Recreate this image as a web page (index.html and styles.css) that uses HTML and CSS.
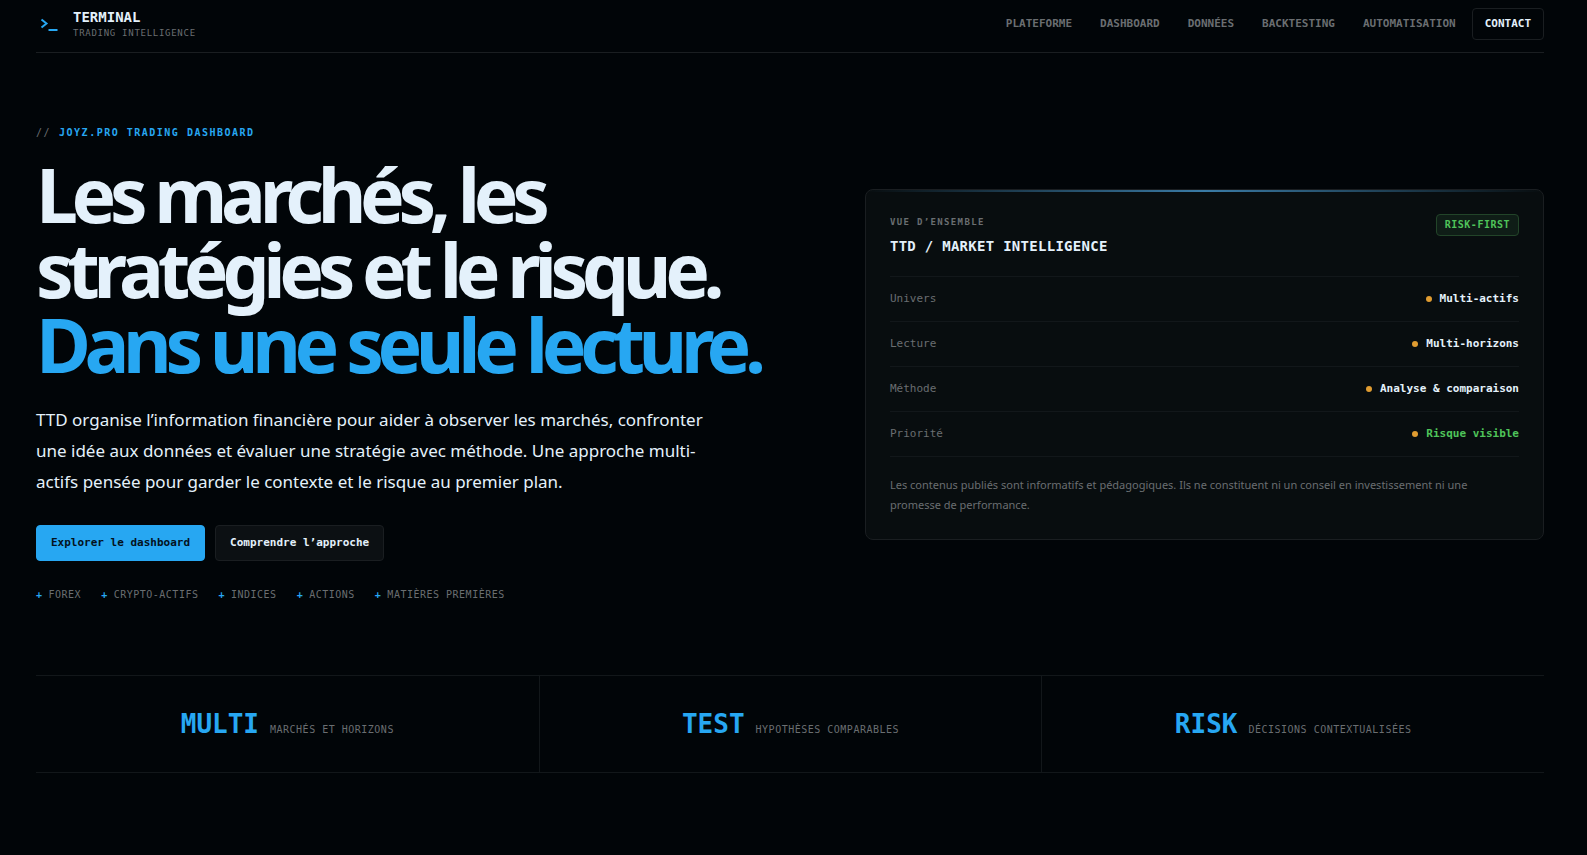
FILE: index.html
```html
<!DOCTYPE html>
<html lang="fr">
<head>
<meta charset="utf-8">
<meta name="viewport" content="width=device-width, initial-scale=1">
<title>Terminal – Trading Intelligence</title>
<link rel="stylesheet" href="styles.css">
</head>
<body>
<div class="shell">
  <header class="header">
    <a class="brand" href="#">
      <svg class="brand-mark" viewBox="0 0 26 26" fill="none" stroke="currentColor" stroke-width="2" aria-hidden="true"><path d="M5.5 8.5 10.5 12.5 5.5 16.5M12.5 19H21.5"/></svg>
      <span class="brand-text">
        <strong class="brand-name">TERMINAL</strong>
        <span class="brand-tag">TRADING INTELLIGENCE</span>
      </span>
    </a>
    <nav class="nav">
      <a class="nav-link" href="#">PLATEFORME</a>
      <a class="nav-link" href="#">DASHBOARD</a>
      <a class="nav-link" href="#">DONNÉES</a>
      <a class="nav-link" href="#">BACKTESTING</a>
      <a class="nav-link" href="#">AUTOMATISATION</a>
      <a class="nav-link nav-contact" href="#">CONTACT</a>
    </nav>
  </header>

  <main>
    <section class="hero">
      <div class="hero-copy">
        <p class="eyebrow"><span class="eyebrow-mark">//</span><span>JOYZ.PRO TRADING DASHBOARD</span></p>
        <h1 class="title">Les marchés, les stratégies et le risque. <span class="title-accent">Dans une seule lecture.</span></h1>
        <p class="lead">TTD organise l’information financière pour aider à observer les marchés, confronter une idée aux données et évaluer une stratégie avec méthode. Une approche multi-actifs pensée pour garder le contexte et le risque au premier plan.</p>
        <div class="actions">
          <a class="button button-primary" href="#">Explorer le dashboard</a>
          <a class="button" href="#">Comprendre l’approche</a>
        </div>
        <ul class="tags">
          <li>FOREX</li>
          <li>CRYPTO-ACTIFS</li>
          <li>INDICES</li>
          <li>ACTIONS</li>
          <li>MATIÈRES PREMIÈRES</li>
        </ul>
      </div>

      <aside class="card">
        <div class="card-head">
          <div>
            <p class="card-kicker">VUE D’ENSEMBLE</p>
            <h2 class="card-title">TTD / MARKET INTELLIGENCE</h2>
          </div>
          <span class="badge">RISK-FIRST</span>
        </div>
        <dl class="rows">
          <div class="row"><dt>Univers</dt><dd>Multi-actifs</dd></div>
          <div class="row"><dt>Lecture</dt><dd>Multi-horizons</dd></div>
          <div class="row"><dt>Méthode</dt><dd>Analyse &amp; comparaison</dd></div>
          <div class="row"><dt>Priorité</dt><dd class="positive">Risque visible</dd></div>
        </dl>
        <p class="note">Les contenus publiés sont informatifs et pédagogiques. Ils ne constituent ni un conseil en investissement ni une promesse de performance.</p>
      </aside>
    </section>

    <section class="stats">
      <div class="stat"><strong>MULTI</strong><span>MARCHÉS ET HORIZONS</span></div>
      <div class="stat"><strong>TEST</strong><span>HYPOTHÈSES COMPARABLES</span></div>
      <div class="stat"><strong>RISK</strong><span>DÉCISIONS CONTEXTUALISÉES</span></div>
    </section>
  </main>
</div>
</body>
</html>
```
FILE: styles.css
```css
:root {
  --bg: #010508;
  --text: #e4f1fb;
  --muted: #6a6e71;
  --line: #1a1e21;
  --line-soft: #12171a;
  --blue: #27a7f2;
  --green: #4fc45a;
  --orange: #e09c31;
  --mono: "DejaVu Sans Mono", "Liberation Mono", monospace;
  --sans: "Noto Sans", "Open Sans", sans-serif;
}

* { box-sizing: border-box; }

body {
  margin: 0;
  background: var(--bg);
  color: var(--text);
  font-family: var(--sans);
}

p, h1, h2, ul, dl, dd { margin: 0; padding: 0; }
a { color: inherit; text-decoration: none; }

.shell { padding: 0 43px 0 36px; }

.header {
  display: flex;
  align-items: center;
  justify-content: space-between;
  padding: 8px 0 12px;
  border-bottom: 1px solid var(--line);
}

.brand { display: flex; align-items: center; gap: 11px; font-family: var(--mono); }
.brand-mark { width: 26px; height: 26px; color: var(--blue); }
.brand-text { display: flex; flex-direction: column; }
.brand-name { font-size: 14px; line-height: 18px; }
.brand-tag { font-size: 9px; line-height: 14px; letter-spacing: 0.08em; color: var(--muted); }

.nav { display: flex; gap: 4px; font-family: var(--mono); }
.nav-link {
  padding: 0 12px;
  font-size: 11px;
  font-weight: 700;
  line-height: 30px;
  color: var(--muted);
  border: 1px solid transparent;
  border-width: 1px 0;
}
.nav-contact { color: var(--text); border: 1px solid var(--line); border-radius: 4px; }

.hero {
  display: grid;
  grid-template-columns: 11fr 10fr;
  align-items: center;
  gap: 82px;
  padding: 72px 0;
}

.eyebrow {
  display: flex;
  gap: 8px;
  font: 700 10px/16px var(--mono);
  letter-spacing: 0.15em;
  color: var(--blue);
}
.eyebrow-mark { font-weight: 400; color: var(--muted); }

.title {
  margin-top: 16px;
  font-size: 75px;
  line-height: 75px;
  font-weight: 700;
  letter-spacing: -0.085em;
}
.title-accent { display: block; color: var(--blue); }

.lead {
  max-width: 690px;
  margin-top: 22px;
  font-size: 17px;
  line-height: 31px;
}

.actions { display: flex; gap: 10px; margin-top: 28px; }
.button {
  padding: 0 14px;
  font: 700 11px/34px var(--mono);
  background: #0c1013;
  border: 1px solid var(--line);
  border-radius: 4px;
}
.button-primary { color: #04121d; background: var(--blue); border-color: var(--blue); }

.tags {
  display: flex;
  flex-wrap: wrap;
  gap: 20px;
  margin-top: 26px;
  list-style: none;
  font: 10px/16px var(--mono);
  letter-spacing: 0.05em;
  color: var(--muted);
}
.tags li { display: flex; gap: 6px; }
.tags li::before { content: "+"; color: var(--blue); font-weight: 700; }

.card {
  position: relative;
  padding: 24px;
  background: #080d0f;
  border: 1px solid var(--line);
  border-radius: 8px;
  overflow: hidden;
}
.card::before {
  content: "";
  position: absolute;
  inset: 0 0 auto;
  height: 2px;
  background: linear-gradient(90deg, transparent, #3a7ba6, transparent);
}
.card-head {
  display: flex;
  align-items: flex-start;
  justify-content: space-between;
  padding-bottom: 20px;
  border-bottom: 1px solid var(--line-soft);
}
.card-kicker { font: 700 9px/16px var(--mono); letter-spacing: 0.15em; color: var(--muted); }
.card-title { margin-top: 6px; font: 700 14px/20px var(--mono); letter-spacing: 0.02em; }
.badge {
  padding: 0 8px;
  font: 700 10px/20px var(--mono);
  letter-spacing: 0.05em;
  color: var(--green);
  background: #0f1d17;
  border: 1px solid #224429;
  border-radius: 4px;
}

.row {
  display: flex;
  justify-content: space-between;
  padding: 12px 0;
  font: 11px/20px var(--mono);
  color: var(--muted);
  border-bottom: 1px solid var(--line-soft);
}
.row dd { display: flex; align-items: center; gap: 8px; font-weight: 700; color: var(--text); }
.row dd::before { content: ""; width: 6px; height: 6px; border-radius: 50%; background: var(--orange); }
.row .positive { color: var(--green); }

.note { max-width: 610px; margin-top: 18px; font-size: 11px; line-height: 20px; color: var(--muted); }

.stats {
  display: grid;
  grid-template-columns: repeat(3, 1fr);
  border: 1px solid var(--line-soft);
  border-width: 1px 0;
}
.stat {
  display: flex;
  align-items: baseline;
  justify-content: center;
  gap: 11px;
  padding: 32px 16px;
  font-family: var(--mono);
}
.stat + .stat { border-left: 1px solid var(--line-soft); }
.stat strong { font-size: 26px; line-height: 32px; color: var(--blue); }
.stat span { font-size: 10px; letter-spacing: 0.05em; color: var(--muted); }
```
